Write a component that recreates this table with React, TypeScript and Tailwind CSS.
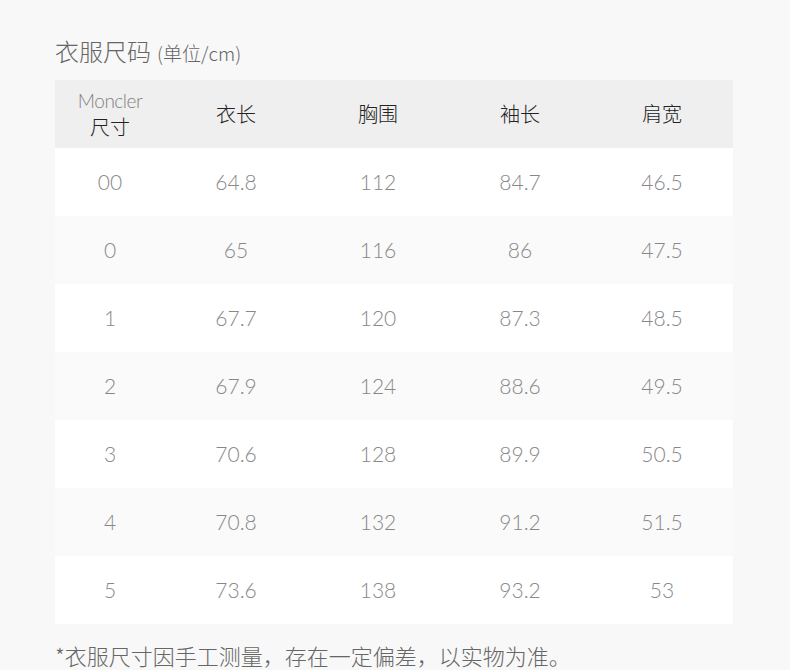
import React from "react";

const rows = [
  ["00", "64.8", "112", "84.7", "46.5"],
  ["0", "65", "116", "86", "47.5"],
  ["1", "67.7", "120", "87.3", "48.5"],
  ["2", "67.9", "124", "88.6", "49.5"],
  ["3", "70.6", "128", "89.9", "50.5"],
  ["4", "70.8", "132", "91.2", "51.5"],
  ["5", "73.6", "138", "93.2", "53"],
];

const cjk = "font-['Noto_Sans_CJK_SC',sans-serif]";
const num = "font-['Lato','Noto_Sans_CJK_SC',sans-serif] font-light";

export default function App() {
  return (
    <div className="w-[790px] h-[670px] bg-[#f8f8f8] overflow-hidden">
      <div className="pl-[55px] pt-[33px]">
        <div className={`${cjk} flex items-baseline text-[#666] h-[36px]`}>
          <span className="text-[24px] font-light">衣服尺码</span>
          <span className="text-[19px] font-light ml-[6px]">(单位/cm)</span>
        </div>
        <div className="mt-[11px] w-[678px]">
          <div className="grid grid-cols-[110px_142px_142px_142px_142px] h-[68px] bg-[#efefef] items-center text-center">
            <div className="flex flex-col items-center leading-[26px]">
              <span className={`${num} text-[19px] text-[#808080] tracking-[-0.5px]`}>Moncler</span>
              <span className={`${cjk} font-light text-[20px] text-[#222]`}>尺寸</span>
            </div>
            {["衣长", "胸围", "袖长", "肩宽"].map((h) => (
              <div key={h} className={`${cjk} font-light text-[20px] text-[#222]`}>
                {h}
              </div>
            ))}
          </div>
          {rows.map((r, i) => (
            <div
              key={i}
              className={`grid grid-cols-[110px_142px_142px_142px_142px] h-[68px] items-center text-center ${
                i % 2 === 0 ? "bg-white" : "bg-[#fafafa]"
              }`}
            >
              {r.map((c, j) => (
                <div key={j} className={`${num} text-[21px] text-[#888]`}>
                  {c}
                </div>
              ))}
            </div>
          ))}
        </div>
        <div className={`${cjk} font-light text-[22px] text-[#666] mt-[16px] leading-[30px]`}>
          *衣服尺寸因手工测量，存在一定偏差，以实物为准。
        </div>
      </div>
    </div>
  );
}
